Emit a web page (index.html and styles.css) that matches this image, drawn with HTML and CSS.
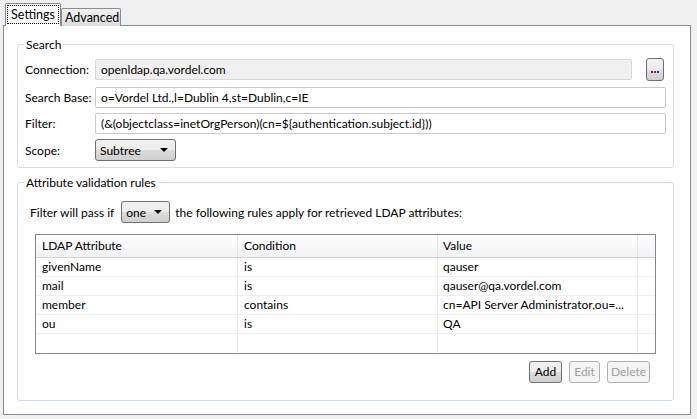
FILE: index.html
```html
<!DOCTYPE html>
<html>
<head>
<meta charset="utf-8">
<link rel="stylesheet" href="styles.css">
</head>
<body>
<div class="tabs">
  <div class="tab active"><span class="focus">Settings</span></div>
  <div class="tab">Advanced</div>
</div>
<div class="panel">
  <div class="group search">
    <div class="group-title">Search</div>
    <div class="form">
      <div class="row row-conn">
        <label>Connection:</label>
        <div class="field disabled">openldap.qa.vordel.com</div>
        <button class="btn dots"><svg width="8" height="2" viewBox="0 0 8 2"><rect x="0" y="0" width="2" height="2" fill="#3a3a8a"/><rect x="3" y="0" width="2" height="2" fill="#8a2a3a"/><rect x="6" y="0" width="2" height="2" fill="#3a3a8a"/></svg></button>
      </div>
      <div class="row">
        <label>Search Base:</label>
        <div class="field">o=Vordel Ltd.,l=Dublin 4,st=Dublin,c=IE</div>
      </div>
      <div class="row">
        <label>Filter:</label>
        <div class="field">(&amp;(objectclass=inetOrgPerson)(cn=${authentication.subject.id}))</div>
      </div>
      <div class="row row-scope">
        <label>Scope:</label>
        <div class="combo scope"><span>Subtree</span><span class="arrow"></span></div>
      </div>
    </div>
  </div>
  <div class="group attrs">
    <div class="group-title">Attribute validation rules</div>
    <div class="pass-row">
      <span>Filter will pass if</span>
      <div class="combo one"><span>one</span><span class="arrow"></span></div>
      <span>the following rules apply for retrieved LDAP attributes:</span>
    </div>
    <div class="table">
      <div class="thead">
        <div class="c c1">LDAP Attribute</div>
        <div class="c c2">Condition</div>
        <div class="c c3">Value</div>
        <div class="c c4"></div>
      </div>
      <div class="tr"><div class="c c1">givenName</div><div class="c c2">is</div><div class="c c3">qauser</div><div class="c c4"></div></div>
      <div class="tr"><div class="c c1">mail</div><div class="c c2">is</div><div class="c c3">qauser@qa.vordel.com</div><div class="c c4"></div></div>
      <div class="tr"><div class="c c1">member</div><div class="c c2">contains</div><div class="c c3">cn=API Server Administrator,ou=...</div><div class="c c4"></div></div>
      <div class="tr"><div class="c c1">ou</div><div class="c c2">is</div><div class="c c3">QA</div><div class="c c4"></div></div>
      <div class="tr last"><div class="c c1"></div><div class="c c2"></div><div class="c c3"></div><div class="c c4"></div></div>
    </div>
    <div class="buttons">
      <button class="btn add">Add</button>
      <button class="btn off edit">Edit</button>
      <button class="btn off del">Delete</button>
    </div>
  </div>
</div>
</body>
</html>
```
FILE: styles.css
```css
* { box-sizing: border-box; }
html, body { margin: 0; padding: 0; }
body {
  background: #f0f0f0;
  font-family: Lato, "Noto Sans", sans-serif;
  font-size: 12px;
  color: #000;
  width: 697px;
  height: 419px;
  overflow: hidden;
}
.tabs {
  display: flex;
  align-items: flex-end;
  padding: 3px 0 0 5px;
  height: 26px;
  margin-bottom: -1px;
  position: relative;
  z-index: 1;
}
.tab {
  border: 1px solid #898c95;
  border-bottom: none;
  height: 18px;
  padding: 0 3px;
  line-height: 17px;
  background: linear-gradient(#f2f2f2, #dcdcdc);
  border-radius: 2px 2px 0 0;
  width: 60px;
  text-align: center;
  font-size: 12.5px;
  white-space: nowrap;
}
.tab.active {
  background: #fff;
  height: 23px;
  width: 56px;
  padding: 1px 1px 0 1px;
}
.tab .focus {
  display: block;
  border: 1px dotted #000;
  height: 19px;
  line-height: 17px;
}
.panel {
  margin: 0 6px 0 3px;
  width: 688px;
  height: 390px;
  background: #fff;
  border: 1px solid #898c95;
  padding: 18px 16px 0 13px;
}
.group {
  border: 1px solid #d5dfe5;
  border-radius: 3px;
}
.group-title {
  display: block;
  width: max-content;
  background: #fff;
  margin: -8px 0 0 6px;
  padding: 0 2px;
  line-height: 15px;
  height: 15px;
}
.search { height: 124px; }
.form { padding: 6px 7px 0 7px; }
.row {
  display: flex;
  align-items: center;
  height: 21px;
  margin-bottom: 5px;
}
.row label { width: 70px; flex: none; }
.row-conn { height: 23px; margin-bottom: 6px; }
.row-scope { height: 22px; }
.field {
  flex: 1;
  height: 21px;
  border: 1px solid #c9cbce;
  border-radius: 2px;
  padding: 0 5px;
  line-height: 19px;
  white-space: nowrap;
  overflow: hidden;
}
.field.disabled {
  background: #f0f0f0;
  border-color: #d9d9d9;
  margin-right: 14px;
}
.btn {
  font-family: inherit;
  font-size: 12px;
  color: #000;
  height: 22px;
  padding: 0;
  border: 1px solid #707070;
  border-radius: 3px;
  background: linear-gradient(#f2f2f2 0%, #ebebeb 50%, #dddddd 51%, #cfcfcf 100%);
  line-height: 18px;
}
.dots {
  width: 18px;
  height: 23px;
  margin-right: 2px;
  display: flex;
  align-items: flex-end;
  justify-content: center;
  padding-bottom: 7px;
}
.dots svg { display: block; }
.combo {
  display: flex;
  align-items: center;
  justify-content: space-between;
  height: 22px;
  border: 1px solid #707070;
  border-radius: 3px;
  background: linear-gradient(#f2f2f2 0%, #ebebeb 50%, #dddddd 51%, #cfcfcf 100%);
  padding: 0 7px 0 4px;
}
.arrow {
  width: 0; height: 0;
  border-left: 4px solid transparent;
  border-right: 4px solid transparent;
  border-top: 4px solid #000;
}
.scope { width: 81px; }
.attrs {
  margin-top: 14px;
  height: 219px;
}
.pass-row {
  display: flex;
  align-items: center;
  margin: 11px 0 0 12px;
  height: 22px;
}
.one { width: 49px; margin: 0 5px 0 7px; }
.table {
  margin: 11px 0 0 17px;
  width: 621px;
  height: 120px;
  border: 1px solid #828790;
}
.thead, .tr { display: flex; }
.thead {
  height: 23px;
  background: linear-gradient(#ffffff, #f1f2f4);
  border-bottom: 1px solid #d5d5d5;
}
.thead .c { line-height: 22px; border-right: 1px solid #e5e5e5; }
.tr { height: 19px; }
.tr .c {
  line-height: 18px;
  border-bottom: 1px solid #f0f0f0;
  border-right: 1px solid #e8eef8;
}
.tr.last .c { border-bottom: none; }
.c { padding-left: 6px; white-space: nowrap; overflow: hidden; }
.c1 { width: 202px; }
.c2 { width: 200px; }
.c3 { width: 200px; padding-left: 5px; }
.c4 { width: 17px; }
.thead .c4, .tr .c4 { border-right: none; }
.buttons {
  display: flex;
  justify-content: flex-end;
  margin-top: 7px;
  padding-right: 23px;
  gap: 7px;
}
.add { width: 33px; }
.off {
  color: #a0a0a0;
  border-color: #adb2b5;
  background: #f4f4f4;
}
.edit { width: 31px; }
.del { width: 43px; }
```
